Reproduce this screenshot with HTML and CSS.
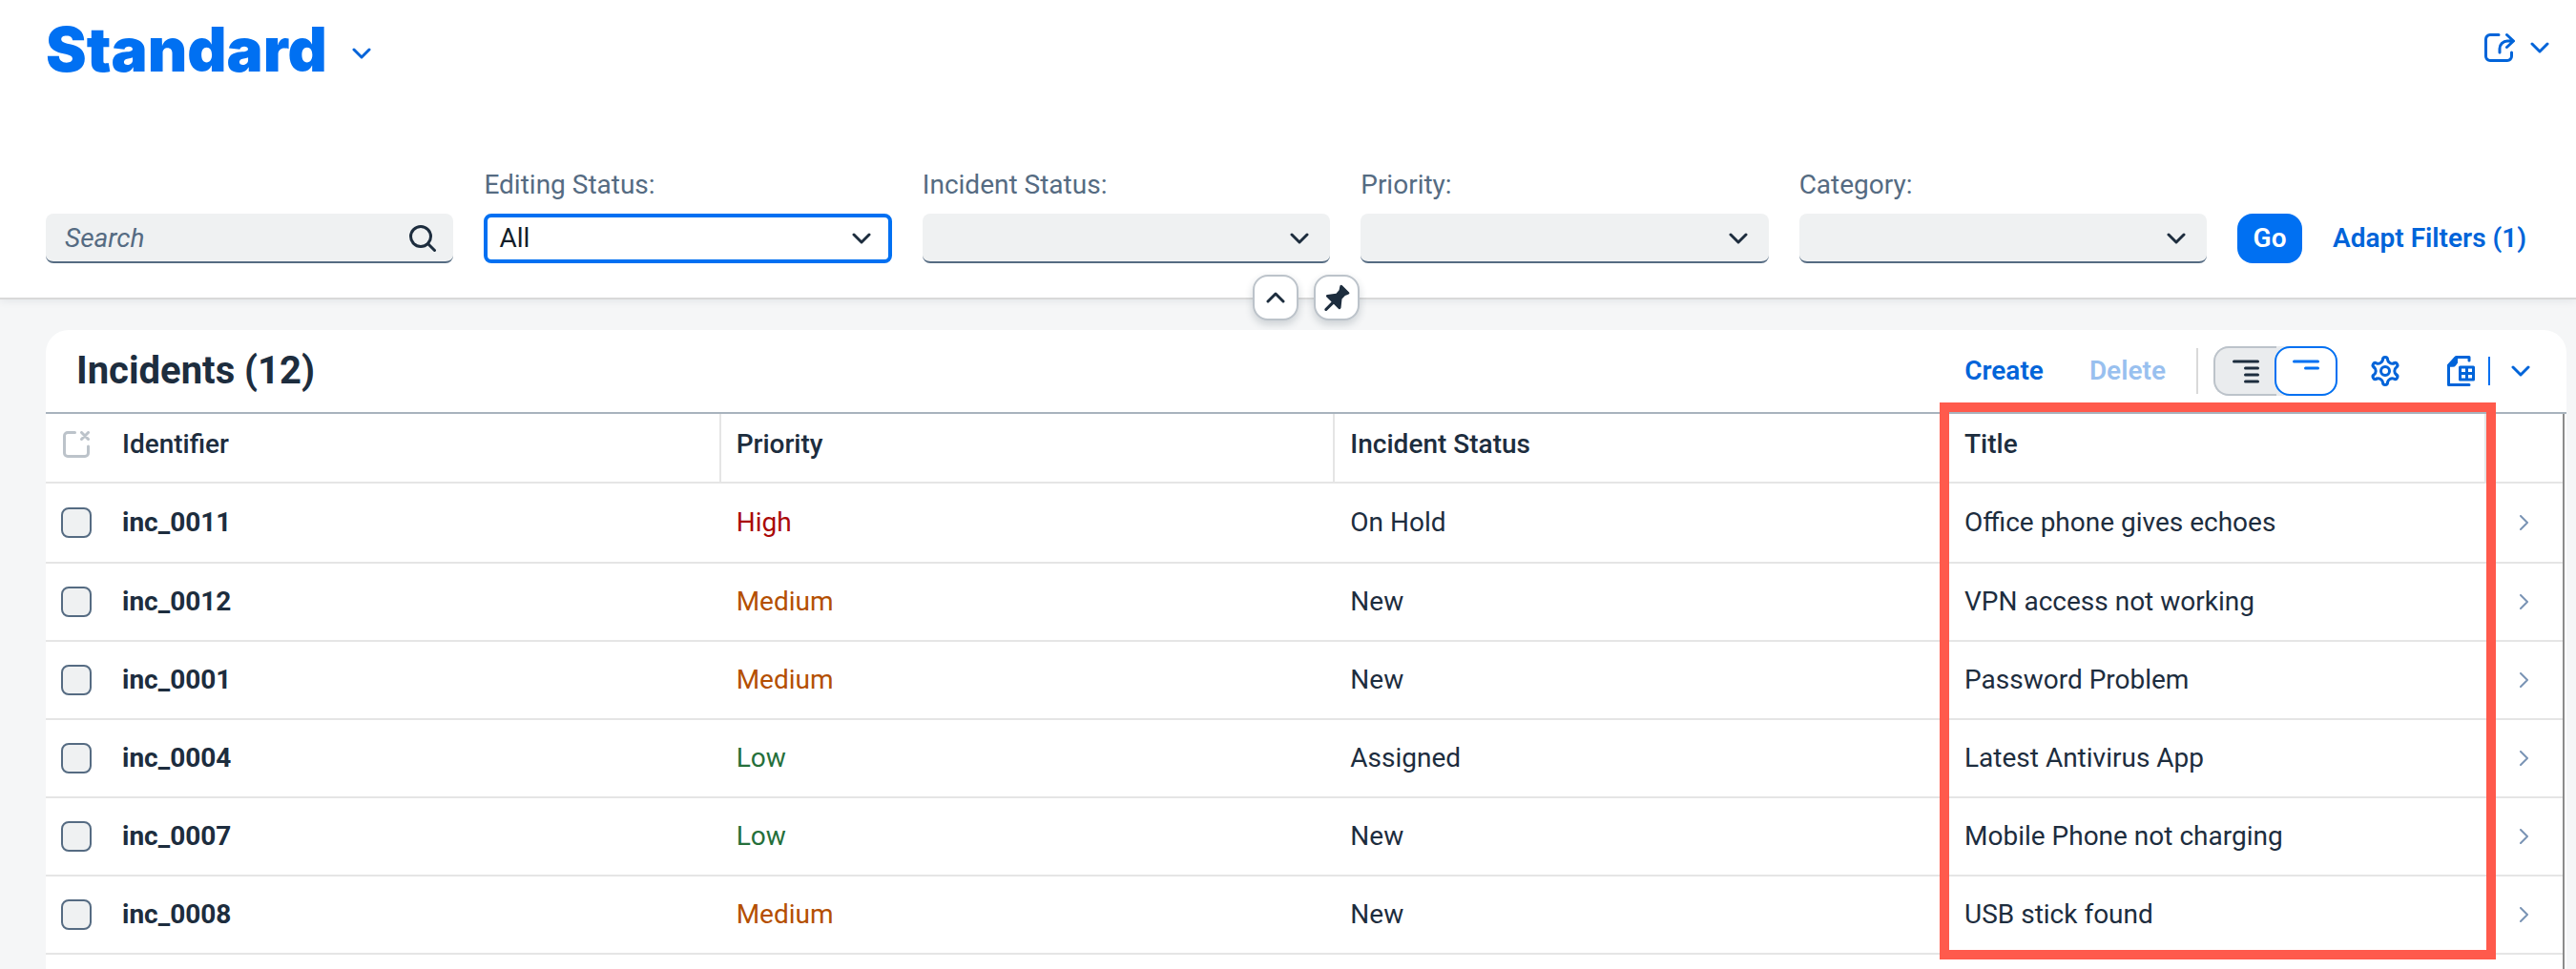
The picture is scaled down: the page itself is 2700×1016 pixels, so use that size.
FILE: index.html
```html
<!DOCTYPE html>
<html lang="en">
<head>
<meta charset="utf-8">
<meta name="viewport" content="width=device-width, initial-scale=1">
<title>Incidents</title>
<link rel="stylesheet" href="styles.css">
</head>
<body>
<svg class="defs" aria-hidden="true">
  <symbol id="down" viewBox="0 0 20 12"><path d="M2 2l8 8 8-8"/></symbol>
  <symbol id="up" viewBox="0 0 20 12"><path d="M2 10l8-8 8 8"/></symbol>
  <symbol id="right" viewBox="0 0 10 16"><path d="M1 1l7 7-7 7"/></symbol>
</svg>

<header class="page-header">
  <div class="title-row">
    <button class="variant" type="button">
      <h1>Standard</h1>
      <svg class="icon chevron" aria-hidden="true"><use href="#down"/></svg>
    </button>
    <button class="share" type="button" aria-label="Share">
      <svg class="icon icon-32" viewBox="0 0 32 32" aria-hidden="true"><path d="M15 2.500H6a4.500 4.500 0 0 0-4.500 4.500v18A4.500 4.500 0 0 0 6 29.500h18a4.500 4.500 0 0 0 4.500-4.500v-4M16 21v-4a8 8 0 0 1 8-8h6M23.500 2.500L30.500 9l-7 6.500"/></svg>
      <svg class="icon chevron" aria-hidden="true"><use href="#down"/></svg>
    </button>
  </div>

  <form class="filters">
    <div class="field">
      <div class="control">
        <input class="box search" type="search" placeholder="Search" aria-label="Search">
        <svg class="icon search-icon" viewBox="0 0 28 28" aria-hidden="true"><circle cx="12" cy="12" r="10.500"/><path d="M19.500 19.500l7 7"/></svg>
      </div>
    </div>
    <div class="field">
      <label for="editing">Editing Status:</label>
      <div class="control">
        <select class="box focused" id="editing"><option>All</option></select>
        <svg class="icon chevron" aria-hidden="true"><use href="#down"/></svg>
      </div>
    </div>
    <div class="field">
      <label for="status">Incident Status:</label>
      <div class="control">
        <select class="box" id="status"><option></option></select>
        <svg class="icon chevron" aria-hidden="true"><use href="#down"/></svg>
      </div>
    </div>
    <div class="field">
      <label for="priority">Priority:</label>
      <div class="control">
        <select class="box" id="priority"><option></option></select>
        <svg class="icon chevron" aria-hidden="true"><use href="#down"/></svg>
      </div>
    </div>
    <div class="field">
      <label for="category">Category:</label>
      <div class="control">
        <select class="box" id="category"><option></option></select>
        <svg class="icon chevron" aria-hidden="true"><use href="#down"/></svg>
      </div>
    </div>
    <div class="filter-actions">
      <button class="go" type="button">Go</button>
      <button class="text-button" type="button">Adapt Filters (1)</button>
    </div>
  </form>
</header>

<div class="header-toggles">
  <button type="button" aria-label="Collapse header"><svg class="icon chevron" aria-hidden="true"><use href="#up"/></svg></button>
  <button type="button" aria-label="Pin header"><svg class="pin" viewBox="0 0 28 28" aria-hidden="true"><path d="M17.500 1.500q1-1.500 2.300-.2l7 7q1.300 1.300-.3 2.300l-3.700 1.400-3.300 3.600-1 9.200q-.8 2.400-2.600.9l-5-5-7.200 7q-1.200.8-2-.1t0-2l6.900-7.200-5.100-5q-1.500-1.700.6-2.400l9.400-1.200 3-3.500z"/></svg></button>
</div>

<main class="card">
  <div class="toolbar">
    <h2>Incidents (12)</h2>
    <button class="text-button" type="button">Create</button>
    <button class="text-button" type="button" disabled>Delete</button>
    <span class="separator"></span>
    <div class="segmented">
      <button type="button" aria-label="Show more"><svg class="icon lines" viewBox="0 0 28 32" aria-hidden="true"><path d="M1.500 6h25M13.500 13h13M13.500 20h13M13.500 27h13"/></svg></button>
      <button class="selected" type="button" aria-label="Show less"><svg class="icon lines" viewBox="0 0 28 32" aria-hidden="true"><path d="M1.500 6h25M13.500 13h13"/></svg></button>
    </div>
    <button class="icon-button" type="button" aria-label="Settings">
      <svg class="icon icon-32" viewBox="-16 -16 32 32" aria-hidden="true">
        <g id="gear-tooth"><path d="M-2.500 -12A2.500 2.500 0 0 1 2.500 -12C2.800 -9 6.390 -6.920 9.140 -8.170"/></g>
        <use href="#gear-tooth" transform="rotate(60)"/>
        <use href="#gear-tooth" transform="rotate(120)"/>
        <use href="#gear-tooth" transform="rotate(180)"/>
        <use href="#gear-tooth" transform="rotate(240)"/>
        <use href="#gear-tooth" transform="rotate(300)"/>
        <circle r="4.500"/>
      </svg>
    </button>
    <div class="export">
      <button type="button" aria-label="Export">
        <svg class="icon icon-32" viewBox="0 0 32 32" aria-hidden="true"><path d="M24 5V1.500H10.500L2.500 10v20.500H24M2.500 10h5.500l2.500-3V1.500z"/><path d="M3 10l7-8v5q-1 3-4 3z" fill="currentColor"/><path d="M14.500 12h14v13h-14zM21.500 12v13M14.500 18.500h14"/></svg>
      </button>
      <button class="export-menu" type="button" aria-label="Export options"><svg class="icon chevron" aria-hidden="true"><use href="#down"/></svg></button>
    </div>
  </div>

  <div class="table-area">
    <table>
      <colgroup><col class="col-check"><col class="col-data"><col class="col-data"><col class="col-data"><col><col class="col-nav"></colgroup>
      <thead>
        <tr>
          <th class="check"><svg class="icon clear" viewBox="0 0 28 28" aria-label="Deselect all"><path d="M12.500 1.500H5A3.500 3.500 0 0 0 1.500 5v18A3.500 3.500 0 0 0 5 26.500h18a3.500 3.500 0 0 0 3.500-3.500v-7M19.500 1.500l7 7M26.500 1.500l-7 7"/></svg></th>
          <th scope="col">Identifier</th>
          <th scope="col">Priority</th>
          <th scope="col">Incident Status</th>
          <th scope="col" class="title">Title<span class="highlight"></span></th>
          <th></th>
        </tr>
      </thead>
      <tbody>
        <tr>
          <td class="check"><input type="checkbox" aria-label="Select inc_0011"></td>
          <td class="id">inc_0011</td><td class="high">High</td><td>On Hold</td><td>Office phone gives echoes</td>
          <td class="nav"><svg class="icon" aria-hidden="true"><use href="#right"/></svg></td>
        </tr>
        <tr>
          <td class="check"><input type="checkbox" aria-label="Select inc_0012"></td>
          <td class="id">inc_0012</td><td class="medium">Medium</td><td>New</td><td>VPN access not working</td>
          <td class="nav"><svg class="icon" aria-hidden="true"><use href="#right"/></svg></td>
        </tr>
        <tr>
          <td class="check"><input type="checkbox" aria-label="Select inc_0001"></td>
          <td class="id">inc_0001</td><td class="medium">Medium</td><td>New</td><td>Password Problem</td>
          <td class="nav"><svg class="icon" aria-hidden="true"><use href="#right"/></svg></td>
        </tr>
        <tr>
          <td class="check"><input type="checkbox" aria-label="Select inc_0004"></td>
          <td class="id">inc_0004</td><td class="low">Low</td><td>Assigned</td><td>Latest Antivirus App</td>
          <td class="nav"><svg class="icon" aria-hidden="true"><use href="#right"/></svg></td>
        </tr>
        <tr>
          <td class="check"><input type="checkbox" aria-label="Select inc_0007"></td>
          <td class="id">inc_0007</td><td class="low">Low</td><td>New</td><td>Mobile Phone not charging</td>
          <td class="nav"><svg class="icon" aria-hidden="true"><use href="#right"/></svg></td>
        </tr>
        <tr>
          <td class="check"><input type="checkbox" aria-label="Select inc_0008"></td>
          <td class="id">inc_0008</td><td class="medium">Medium</td><td>New</td><td>USB stick found</td>
          <td class="nav"><svg class="icon" aria-hidden="true"><use href="#right"/></svg></td>
        </tr>
      </tbody>
    </table>
  </div>
</main>
</body>
</html>
```
FILE: styles.css
```css
* { box-sizing: border-box; }

body {
  margin: 0;
  min-height: 100vh;
  display: flex;
  flex-direction: column;
  background: #f5f6f7;
  color: #1d2d3e;
  font: 28px/36px Roboto, "Noto Sans", sans-serif;
}

h1, h2 { margin: 0; }

button {
  display: flex;
  align-items: center;
  justify-content: center;
  margin: 0;
  padding: 0;
  border: 0;
  background: none;
  color: #0064d9;
  font: inherit;
  font-weight: 600;
}

.defs { display: none; }

.icon {
  fill: none;
  stroke: currentColor;
  stroke-width: 3;
  stroke-linecap: round;
  stroke-linejoin: round;
}

.icon-32 { width: 32px; height: 32px; }
.chevron { width: 20px; height: 12px; }

/* Page header */
.page-header {
  padding: 16px 52px 36px 48px;
  background: #fff;
  border-bottom: 2px solid #d9d9d9;
  box-shadow: 0 2px 8px rgba(34, 53, 72, 0.08);
}

.title-row {
  display: flex;
  justify-content: space-between;
  align-items: flex-start;
  height: 160px;
  margin-right: -24px;
}

.variant { gap: 26px; }
.variant .chevron { margin-top: 8px; }

h1 {
  color: #0070f2;
  font-family: Inter, Roboto, sans-serif;
  font-size: 64px;
  line-height: 72px;
  font-weight: 900;
}

.share { gap: 16px; padding-top: 18px; }

.filters {
  display: flex;
  align-items: flex-end;
  gap: 32px;
}

.field {
  flex: 1 1 0;
  display: flex;
  flex-direction: column;
  gap: 12px;
}

.field label { color: #556b82; }

.control { display: grid; align-items: center; }
.control > * { grid-area: 1 / 1; }

.control .icon {
  justify-self: end;
  margin-right: 22px;
  pointer-events: none;
}

.control .search-icon { width: 28px; height: 28px; margin-right: 18px; }

.box {
  appearance: none;
  width: 100%;
  height: 52px;
  margin: 0;
  padding: 0 20px;
  border: 0;
  border-bottom: 2px solid #556b82;
  border-radius: 8px;
  background: #eff1f2;
  color: #131e29;
  font: inherit;
  outline: 0;
}

.box.focused {
  padding: 0 12px;
  border: 4px solid #0070f2;
  background: #fff;
}

.search::placeholder { color: #556b82; font-style: italic; opacity: 1; }

.filter-actions { display: flex; gap: 32px; }

.go {
  width: 68px;
  height: 52px;
  border-radius: 16px;
  background: #0070f2;
  color: #fff;
}

.header-toggles {
  display: flex;
  justify-content: center;
  gap: 16px;
  margin: -26px 0 10px;
  padding-left: 38px;
}

.header-toggles button {
  width: 48px;
  height: 48px;
  border: 2px solid #bcc3ca;
  border-radius: 16px;
  background: #fff;
  box-shadow: 0 4px 8px rgba(34, 53, 72, 0.2);
  color: #1d2d3e;
}

.pin { width: 28px; height: 28px; fill: currentColor; }

/* Incidents table */
.card {
  flex: 1;
  display: flex;
  flex-direction: column;
  margin: 0 10px 0 48px;
  border-radius: 24px 24px 0 0;
  background: #fff;
}

.toolbar {
  display: flex;
  align-items: center;
  height: 88px;
  padding: 0 38px 0 32px;
  border-bottom: 2px solid #a8b3bd;
}

h2 { flex: 1; font-size: 40px; line-height: 48px; }

.toolbar .text-button { margin-right: 48px; }
.toolbar .text-button:disabled { margin-right: 32px; opacity: 0.4; }

.separator { width: 2px; height: 48px; background: #d9d9d9; }

.segmented {
  display: flex;
  margin: 0 34px 0 16px;
  border-radius: 16px;
  background: #eaecee;
}

.segmented button {
  width: 66px;
  height: 52px;
  border: 2px solid #bcc3ca;
  border-right: 0;
  border-radius: 16px 0 0 16px;
  color: #1d2d3e;
}

.segmented .selected {
  margin-left: -2px;
  border: 2px solid #0070f2;
  border-radius: 16px;
  background: #fff;
  color: #0070f2;
}

.lines { width: 28px; height: 32px; }

.icon-button { margin-right: 48px; }

.export { display: flex; align-items: center; }

.export-menu {
  height: 30px;
  margin-left: 12px;
  padding-left: 22px;
  border-left: 2px solid #0070f2;
}

.table-area {
  flex: 1;
  margin-right: 2px;
  border-right: 2px solid #8c8c8c;
}

table {
  width: 100%;
  table-layout: fixed;
  border-collapse: separate;
  border-spacing: 0;
}

.col-check { width: 64px; }
.col-data { width: 24.4%; }
.col-nav { width: 80px; }

th, td {
  height: 82px;
  padding: 0 16px;
  border-bottom: 2px solid #e5e5e5;
  text-align: left;
}

th {
  height: 73px;
  padding-bottom: 8px;
  border-right: 2px solid #e5e5e5;
  font-weight: 500;
}

th.check { border-right: 0; }
th:last-child { border-right: 0; }

tbody tr:first-child td { height: 84px; }

.id { font-weight: 700; }
.high { color: #aa0808; }
.medium { color: #b44f00; }
.low { color: #256f3a; }

.clear { display: block; width: 28px; height: 28px; margin-left: 2px; color: #bcc3ca; }

.check input {
  appearance: none;
  display: block;
  width: 32px;
  height: 32px;
  margin: 0;
  border: 2px solid #556b82;
  border-radius: 8px;
  background: #eff1f2;
}

.nav svg {
  display: block;
  width: 10px;
  height: 16px;
  margin: 0 auto;
  color: #7a94b5;
  stroke-width: 2;
}

/* Callout frame round the Title column */
.title { position: relative; }

.highlight {
  position: absolute;
  top: -12px;
  left: -10px;
  right: -12px;
  height: 584px;
  border: 10px solid #ff5a4c;
  pointer-events: none;
}
```
